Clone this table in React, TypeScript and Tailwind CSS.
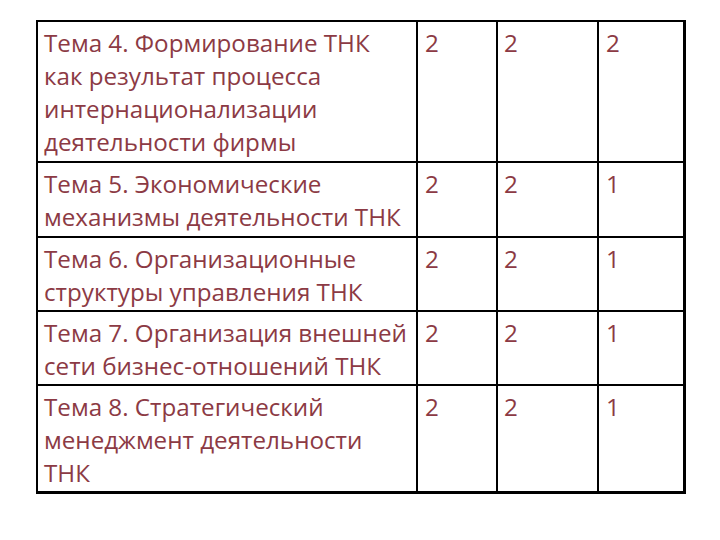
import React from "react";

const rows: { lines: string[]; vals: string[]; h: string }[] = [
  {
    lines: ["Тема 4. Формирование ТНК", "как результат процесса", "интернационализации", "деятельности фирмы"],
    vals: ["2", "2", "2"],
    h: "h-[141px] border-b-2",
  },
  {
    lines: ["Тема 5. Экономические", "механизмы деятельности ТНК"],
    vals: ["2", "2", "1"],
    h: "h-[75px] border-b-2",
  },
  {
    lines: ["Тема 6. Организационные", "структуры управления ТНК"],
    vals: ["2", "2", "1"],
    h: "h-[74px] border-b-2",
  },
  {
    lines: ["Тема 7. Организация внешней", "сети бизнес-отношений ТНК"],
    vals: ["2", "2", "1"],
    h: "h-[74px] border-b-2",
  },
  {
    lines: ["Тема 8. Стратегический", "менеджмент деятельности", "ТНК"],
    vals: ["2", "2", "1"],
    h: "h-[105px]",
  },
];

export default function App() {
  return (
    <div className="w-[720px] h-[540px] bg-white pt-[20px] pl-[36px]" style={{ fontFamily: '"Open Sans", "Noto Sans", sans-serif' }}>
      <div className="w-[650px] border-black border-l-2 border-t-2 border-r-[3px] border-b-[3px] text-[#8c3a44] text-[24.2px] leading-[33px]">
        {rows.map((r, i) => (
          <div key={i} className={`flex border-black ${r.h}`}>
            <div className="w-[380px] shrink-0 border-r-2 border-black pl-[6px] pt-[4px]">
              {r.lines.map((l, j) => (
                <div key={j} className="whitespace-nowrap">{l}</div>
              ))}
            </div>
            <div className="w-[80px] shrink-0 border-r-2 border-black pl-[7px] pt-[4px]">{r.vals[0]}</div>
            <div className="w-[101px] shrink-0 border-r-2 border-black pl-[6px] pt-[4px]">{r.vals[1]}</div>
            <div className="flex-1 pl-[7px] pt-[4px]">{r.vals[2]}</div>
          </div>
        ))}
      </div>
    </div>
  );
}
